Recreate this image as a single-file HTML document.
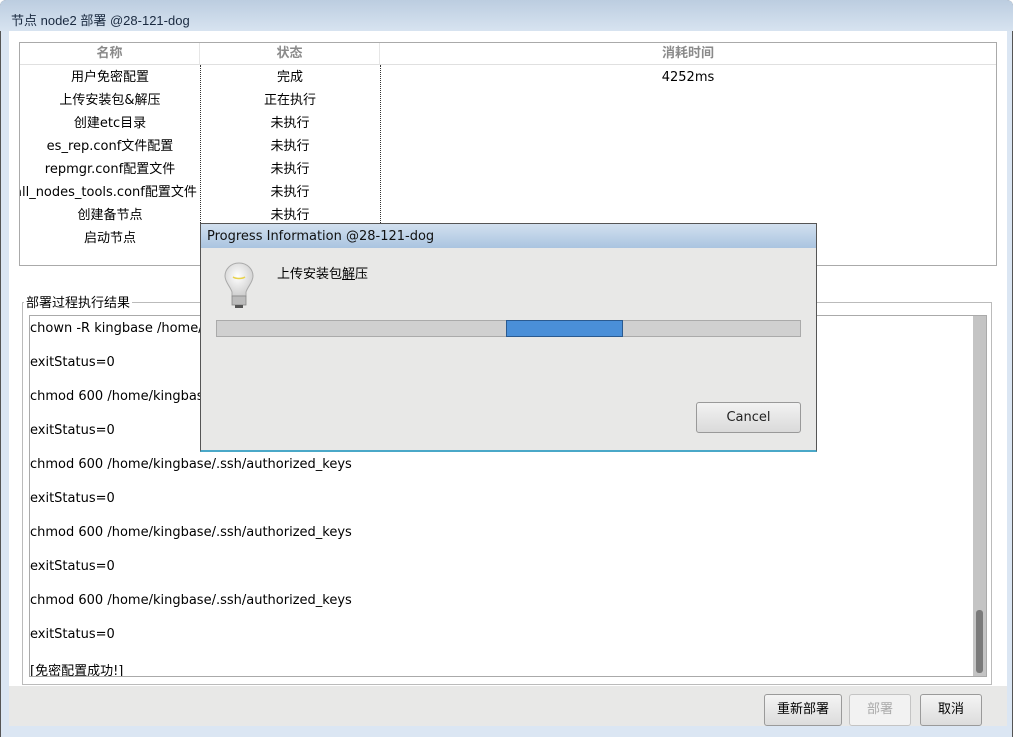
<!DOCTYPE html>
<html><head><meta charset="utf-8"><style>
*{margin:0;padding:0;box-sizing:border-box}
body{width:1015px;height:737px;overflow:hidden;background:#fff;font-family:"DejaVu Sans","Noto Sans CJK SC",sans-serif;font-size:13px;color:#000;position:relative}
.abs{position:absolute}
#win{left:0;top:0;width:1013px;height:737px;background:#dbe6f3;border:1px solid #555;border-bottom:none;border-radius:6px 6px 0 0}
#title{left:0;top:0;width:1013px;height:31px;background:linear-gradient(#bccde0,#d7e3f0);border-radius:6px 6px 0 0}
#title span{position:absolute;left:11px;top:10px;font-size:13px;color:#1a2a40;font-family:"Liberation Sans","Noto Sans CJK SC",sans-serif}
#content{left:9px;top:31px;width:998px;height:655px;background:#fff}
#bottom{left:9px;top:686px;width:998px;height:40px;background:#e8e8e7}
#tbl{left:19px;top:42px;width:978px;height:224px;border:1px solid #aaa;background:#fff}
.hd{position:absolute;top:0;height:22px;line-height:21px;text-align:center;color:#8a8a8a;font-weight:bold;border-bottom:1px solid #e0e0e0;border-right:1px solid #e6e6e6}
.cell{position:absolute;height:23px;line-height:25px;text-align:center;white-space:nowrap;overflow:hidden}
.vd{position:absolute;top:22px;height:200px;border-left:1px dotted #333}
#grp{left:22px;top:302px;width:970px;height:383px;border:1px solid #bbb}
#grpt{left:24px;top:292px;background:#fff;padding:0 2px;font-size:13px}
#ta{left:29px;top:315px;width:958px;height:362px;border:1px solid #aaa;background:#fff;overflow:hidden}
.ln{position:absolute;left:0;white-space:nowrap}
#sb{left:973px;top:316px;width:13px;height:360px;background:#c4c4c4}
#thumb{left:976px;top:610px;width:7px;height:63px;background:#7a7a7a;border-radius:3px}
.btn{position:absolute;top:694px;height:32px;border:1px solid #9a9a9a;border-radius:3px;background:linear-gradient(#f4f4f4,#dcdcdc);text-align:center;line-height:30px;font-size:13px}
#dlg{left:200px;top:223px;width:617px;height:229px;border:1px solid #555;border-bottom:2px solid #4aa8c8;background:#e8e8e7}
#dt{left:0;top:0;width:615px;height:24px;background:linear-gradient(#d2e0ef,#aac4e0)}
#dt span{position:absolute;left:6px;top:5px;font-size:13px;color:#111}
#pb{left:15px;top:96px;width:585px;height:17px;background:#d0d0d0;border:1px solid #aaa}
#chunk{left:305px;top:96px;width:117px;height:17px;background:#4a8fd8;border:1px solid #2a5a90}
#cancel{left:495px;top:178px;width:105px;height:31px;border:1px solid #999;border-radius:3px;background:linear-gradient(#f2f2f2,#dadada);text-align:center;line-height:29px;font-size:13px;color:#222}
</style></head><body>
<div id="win" class="abs"></div>
<div id="title" class="abs"><span>节点 node2 部署 @28-121-dog</span></div>
<div id="content" class="abs"></div>
<div id="bottom" class="abs"></div>

<div id="tbl" class="abs">
<div class="hd" style="left:0;width:180px">名称</div>
<div class="hd" style="left:180px;width:180px">状态</div>
<div class="hd" style="left:360px;width:616px;border-right:none">消耗时间</div>
<div class="vd" style="left:180px"></div>
<div class="vd" style="left:360px"></div>
<div class="cell" style="left:0;top:22px;width:180px">用户免密配置</div>
<div class="cell" style="left:0;top:45px;width:180px">上传安装包&amp;解压</div>
<div class="cell" style="left:0;top:68px;width:180px">创建etc目录</div>
<div class="cell" style="left:0;top:91px;width:180px">es_rep.conf文件配置</div>
<div class="cell" style="left:0;top:114px;width:180px">repmgr.conf配置文件</div>
<div class="cell" style="left:0;top:137px;width:180px;text-align:left"><span style="margin-left:-6px">all_nodes_tools.conf配置文件</span></div>
<div class="cell" style="left:0;top:160px;width:180px">创建备节点</div>
<div class="cell" style="left:0;top:183px;width:180px">启动节点</div>
<div class="cell" style="left:180px;top:22px;width:180px">完成</div>
<div class="cell" style="left:180px;top:45px;width:180px">正在执行</div>
<div class="cell" style="left:180px;top:68px;width:180px">未执行</div>
<div class="cell" style="left:180px;top:91px;width:180px">未执行</div>
<div class="cell" style="left:180px;top:114px;width:180px">未执行</div>
<div class="cell" style="left:180px;top:137px;width:180px">未执行</div>
<div class="cell" style="left:180px;top:160px;width:180px">未执行</div>
<div class="cell" style="left:360px;top:22px;width:616px">4252ms</div>
</div>

<div id="grp" class="abs"></div>
<div id="grpt" class="abs">部署过程执行结果</div>
<div id="ta" class="abs">
<div class="ln" style="top:5px">chown -R kingbase /home/kingbase/.ssh/authorized_keys</div>
<div class="ln" style="top:39px">exitStatus=0</div>
<div class="ln" style="top:73px">chmod 600 /home/kingbase/.ssh/authorized_keys</div>
<div class="ln" style="top:107px">exitStatus=0</div>
<div class="ln" style="top:141px">chmod 600 /home/kingbase/.ssh/authorized_keys</div>
<div class="ln" style="top:175px">exitStatus=0</div>
<div class="ln" style="top:209px">chmod 600 /home/kingbase/.ssh/authorized_keys</div>
<div class="ln" style="top:243px">exitStatus=0</div>
<div class="ln" style="top:277px">chmod 600 /home/kingbase/.ssh/authorized_keys</div>
<div class="ln" style="top:311px">exitStatus=0</div>
<div class="ln" style="top:344px">[免密配置成功!]</div>
</div>
<div id="sb" class="abs"></div>
<div id="thumb" class="abs"></div>

<div class="btn" style="left:764px;width:78px">重新部署</div>
<div class="btn" style="left:849px;width:62px;color:#aaa;background:#f2f2f2;border-color:#c4c4c4">部署</div>
<div class="btn" style="left:920px;width:62px">取消</div>

<div id="dlg" class="abs">
<div id="dt" class="abs"><span>Progress Information @28-121-dog</span></div>
<svg class="abs" style="left:20px;top:37px" width="36" height="50" viewBox="0 0 36 50">
<defs><radialGradient id="g" cx="45%" cy="40%" r="60%"><stop offset="0" stop-color="#fff"/><stop offset="1" stop-color="#cfcfcf"/></radialGradient></defs>
<path d="M18 2C9 2 4 9 4 15c0 6 5 10 7 16v4h14v-4c2-6 7-10 7-16C32 9 27 2 18 2z" fill="url(#g)" stroke="#aaa" stroke-width="1"/>
<path d="M12 16c3 2 9 2 12 0" stroke="#e8d24a" stroke-width="1.5" fill="none"/>
<rect x="11" y="35" width="14" height="9" fill="#bbb" stroke="#888" stroke-width="0.8"/>
<rect x="14" y="44" width="8" height="3" fill="#555"/>
</svg>
<div class="abs" style="left:76px;top:39px">上传安装包<u>解</u>压</div>
<div id="pb" class="abs"></div>
<div id="chunk" class="abs"></div>
<div id="cancel" class="abs">Cancel</div>
</div>
</body></html>
